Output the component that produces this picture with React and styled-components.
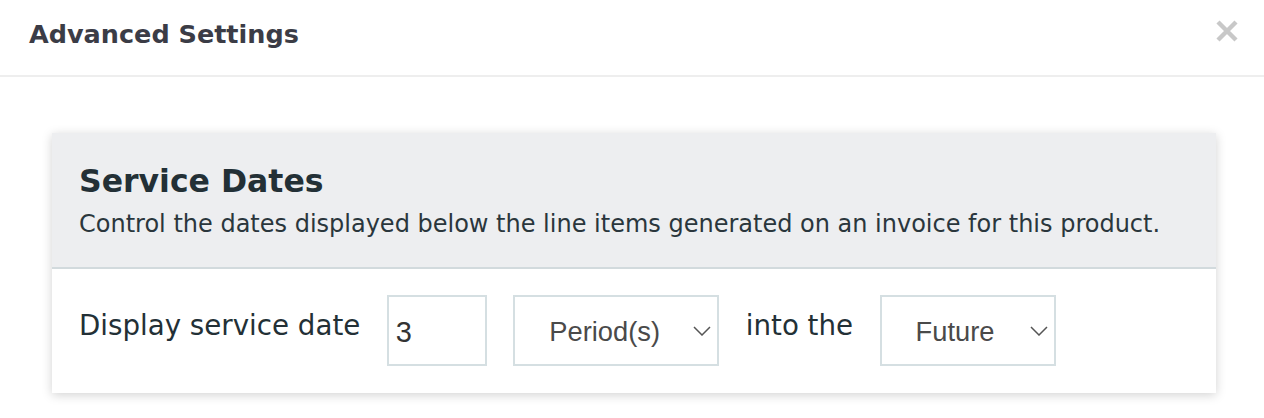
import React from "react"
import styled, { createGlobalStyle } from "styled-components"

const GlobalStyle = createGlobalStyle`
  html, body {
    margin: 0;
    padding: 0;
    background: #ffffff;
    font-family: "DejaVu Sans", Verdana, sans-serif;
  }
`

const Modal = styled.div`
  width: 1264px;
  height: 418px;
  overflow: hidden;
  background: #ffffff;
`
const ModalHeader = styled.div`
  height: 77px;
  box-sizing: border-box;
  padding: 0 25px 0 29px;
  display: flex;
  align-items: center;
  justify-content: space-between;
  border-bottom: 2px solid #eeeeee;
`
const ModalTitle = styled.h2`
  margin: 0;
  font-size: 25.5px;
  font-weight: bold;
  color: #3b3c46;
  padding-bottom: 7px;
`
const CloseButton = styled.button`
  border: 0;
  background: none;
  padding: 0;
  margin-bottom: 14px;
  width: 24px;
  height: 24px;
  display: flex;
  align-items: center;
  justify-content: center;
  cursor: pointer;
`
const ModalBody = styled.div`
  padding: 56px 48px 0 52px;
`
const Card = styled.section`
  background: #ffffff;
  box-shadow: 0 2px 10px rgba(0, 0, 0, 0.18);
`
const CardHeader = styled.div`
  background: #edeef0;
  padding: 29px 27px 28px;
  border-bottom: 2px solid #d2dadd;
`
const CardTitle = styled.h3`
  margin: 0 0 9px;
  font-size: 31.5px;
  line-height: 38px;
  font-weight: bold;
  color: #233036;
`
const CardDesc = styled.p`
  margin: 0;
  font-size: 24px;
  line-height: 30px;
  color: #2a363c;
`
const CardRow = styled.div`
  display: flex;
  align-items: center;
  gap: 26.5px;
  padding: 26px 27px 27px;
`
const Label = styled.span`
  font-size: 27.7px;
  color: #233036;
  padding-bottom: 10px;
  white-space: nowrap;
`
const NumberInput = styled.input`
  box-sizing: border-box;
  width: 100px;
  height: 71px;
  border: 2px solid #d5dfe2;
  padding: 3px 7px 0;
  font-family: "Liberation Sans", Arial, sans-serif;
  font-size: 29px;
  color: #333333;
  outline: none;
`
const SelectBox = styled.div`
  box-sizing: border-box;
  width: ${p => p.$width}px;
  height: 71px;
  border: 2px solid #d5dfe2;
  display: flex;
  align-items: center;
  padding: 2px ${p => p.$right}px 0 34px;
  font-family: "Liberation Sans", Arial, sans-serif;
  font-size: 27.3px;
  color: #4a4a4a;
  cursor: pointer;
`
const SelectText = styled.span`
  flex: 1;
`
const ChevronWrap = styled.span`
  display: flex;
  margin-bottom: 1px;
`

const Chevron = () => (
  <ChevronWrap>
    <svg width="18" height="10" viewBox="0 0 18 10" fill="none">
      <path d="M1 1 L9 9 L17 1" stroke="#555" strokeWidth="1.5" />
    </svg>
  </ChevronWrap>
)

const Select = ({ value, width, right }) => (
  <SelectBox $width={width} $right={right}>
    <SelectText>{value}</SelectText>
    <Chevron />
  </SelectBox>
)

export default function App() {
  return (
    <>
      <GlobalStyle />
      <Modal>
        <ModalHeader>
          <ModalTitle>Advanced Settings</ModalTitle>
          <CloseButton aria-label="Close">
            <svg width="24" height="24" viewBox="0 0 24 24">
              <path d="M3 3 L21 21 M21 3 L3 21" stroke="#c8c8c8" strokeWidth="4.4" />
            </svg>
          </CloseButton>
        </ModalHeader>
        <ModalBody>
          <Card>
            <CardHeader>
              <CardTitle>Service Dates</CardTitle>
              <CardDesc>
                Control the dates displayed below the line items generated on an invoice for this product.
              </CardDesc>
            </CardHeader>
            <CardRow>
              <Label>Display service date</Label>
              <NumberInput defaultValue="3" />
              <Select value="Period(s)" width={206} right={6} />
              <Label>into the</Label>
              <Select value="Future" width={176} right={6} />
            </CardRow>
          </Card>
        </ModalBody>
      </Modal>
    </>
  )
}
